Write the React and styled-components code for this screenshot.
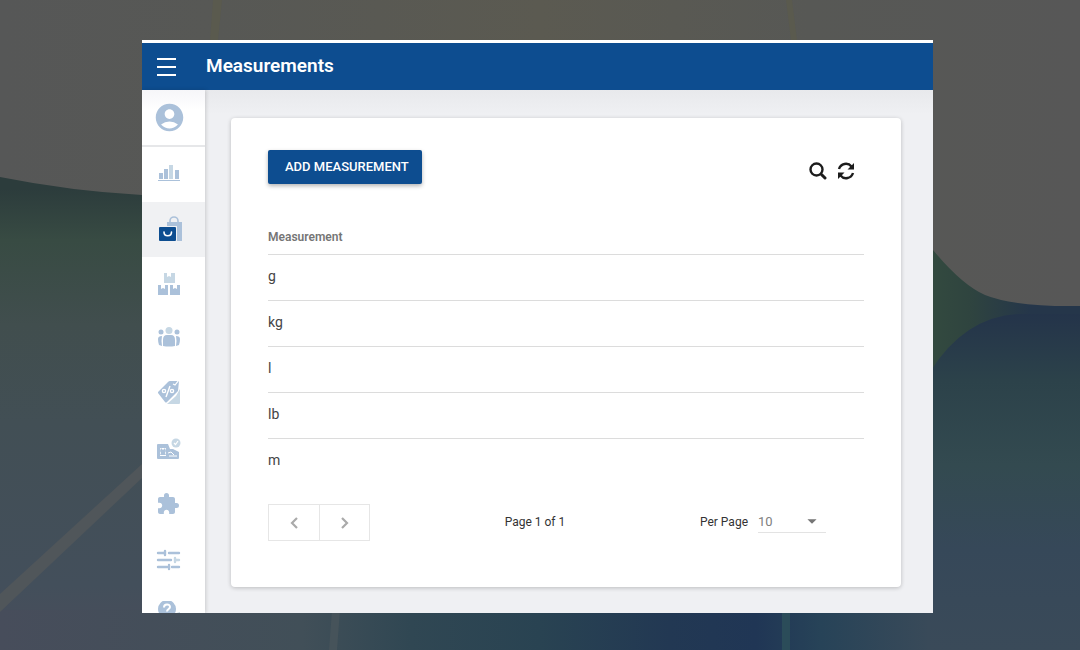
import React, { useState } from "react";
import styled, { createGlobalStyle } from "styled-components";
import { MdAccountCircle, MdExtension, MdArrowDropDown } from "react-icons/md";

const GlobalStyle = createGlobalStyle`
* {
box-sizing: border-box;
}
body {
margin: 0;
font-family: Roboto, "Liberation Sans", sans-serif;
color: #333;
}
`

const Desktop = styled.div`
position: relative;
height: 100vh;
padding: 40px 147px 37px 142px;
overflow: hidden;
`

const Wallpaper = styled.svg`
position: absolute;
inset: 0;
width: 100%;
height: 100%;
`

const Panel = styled.div`
position: relative;
height: 100%;
display: flex;
flex-direction: column;
overflow: hidden;
background-color: #eff0f3;
border-top: 3px solid #fff;
`

const TopBar = styled.header`
display: flex;
align-items: center;
gap: 29px;
flex: 0 0 47px;
padding: 0 15px;
background-color: #0d4d90;
color: #fff;
`

const MenuButton = styled.button`
display: flex;
padding: 0;
border: none;
background: none;
color: inherit;
cursor: pointer;
`

const Title = styled.h1`
margin: 0;
padding-bottom: 2px;
font-size: 19px;
line-height: 24px;
font-weight: 600;
`

const Body = styled.div`
display: flex;
flex: 1;
min-height: 0;
`

const SideBar = styled.nav`
position: relative;
z-index: 1;
flex: 0 0 63px;
overflow: hidden;
background-color: #fff;
box-shadow: 1px 0 4px rgba(0, 0, 0, 0.16);
`

const SideItem = styled.a`
display: flex;
align-items: center;
height: 55px;
padding-left: 13px;
color: #abc1da;
background-color: ${(props) => (props.$active ? "#f0f1f3" : "transparent")};
`

const Profile = styled(SideItem)`
height: 57px;
padding-left: 11px;
border-bottom: 2px solid #e6e7e9;
background-image: linear-gradient(#f6f6f9, #fff 20px);
`

const Main = styled.main`
flex: 1;
padding: 28px 32px 26px 26px;
background: linear-gradient(#e8e9ec, #eff0f3 24px);
`

const Card = styled.section`
height: 100%;
padding: 32px 37px;
background-color: #fff;
border-radius: 4px;
box-shadow: 0 1px 4px rgba(0, 0, 0, 0.22);
`

const Tools = styled.div`
display: flex;
justify-content: space-between;
align-items: flex-start;
`

const AddButton = styled.button`
height: 34px;
padding: 0 13px 2px 17px;
border: none;
border-radius: 2px;
background-color: #0d4d90;
box-shadow: 0 2px 4px rgba(0, 0, 0, 0.3);
color: #fff;
font-family: inherit;
font-size: 13px;
font-weight: 500;
cursor: pointer;
`

const Actions = styled.div`
display: flex;
gap: 10px;
padding: 12px 9px 0 0;
`

const IconButton = styled.button`
display: flex;
padding: 0;
border: none;
background: none;
color: #1c1c1c;
cursor: pointer;
`

const Table = styled.table`
width: 100%;
margin-top: 34px;
border-collapse: collapse;
text-align: left;
`

const Head = styled.th`
height: 36px;
padding: 2px 0 0;
border-bottom: 1px solid #dcdcdc;
font-size: 12px;
font-weight: 600;
color: #757575;
`

const Cell = styled.td`
height: 46px;
padding: 0 0 2px;
font-size: 14px;
color: #444;

tr:not(:last-child) > & {
border-bottom: 1px solid #dcdcdc;
}
`

const Pager = styled.footer`
display: flex;
align-items: center;
justify-content: space-between;
margin-top: 20px;
padding-right: 38px;
font-size: 12px;
`

const PageButtons = styled.div`
display: flex;
border: 1px solid #e6e6e6;
`

const PageButton = styled.button`
display: flex;
align-items: center;
justify-content: center;
width: 50px;
height: 35px;
padding: 0;
border: none;
background: none;
color: #aaa;
cursor: pointer;

& + & {
border-left: 1px solid #e6e6e6;
}
`

const PageInfo = styled.span`
padding-bottom: 2px;
`

const PerPage = styled.label`
display: flex;
align-items: center;
gap: 10px;
padding-bottom: 2px;
`

const SelectBox = styled.span`
display: flex;
align-items: center;
border-bottom: 1px solid #e3e3e3;
color: #757575;
`

const Select = styled.select`
width: 43px;
height: 22px;
padding: 0;
border: none;
background: none;
appearance: none;
color: #808080;
font-family: inherit;
font-size: 13px;
`

const Arrow = styled(MdArrowDropDown)`
margin-right: 3px;
`

const light = "#c6d7e4"
const blue = "#abc1da"
const dark = "#0d4d90"

const MenuIcon = () => (
    <svg width="20" height="20" viewBox="0 0 20 20" stroke="#fff" strokeWidth="2">
        <path d="M0 2h19M0 10h19M0 18h19" />
    </svg>
)

const SearchIcon = () => (
    <svg width="18" height="18" viewBox="0 0 18 18" fill="none" stroke="currentColor">
        <circle cx="7.5" cy="7.5" r="6" strokeWidth="2.4" />
        <path strokeWidth="3" strokeLinecap="round" d="M12.5 12.5l3.5 3.5" />
    </svg>
)

const RefreshIcon = () => (
    <svg width="18" height="18" viewBox="0 0 18 18" fill="currentColor">
        <path fill="none" stroke="currentColor" strokeWidth="2.4" d="M2 7A7.2 7.2 0 0 1 14.5 4.5M16 11A7.2 7.2 0 0 1 3.5 13.5" />
        <path d="M17 1v6.5h-6.5zM1 17v-6.5h6.5z" />
    </svg>
)

const Chevron = ({ d }) => (
    <svg width="10" height="12" viewBox="0 0 10 12" fill="none" stroke="currentColor" strokeWidth="2.2">
        <path d={d} />
    </svg>
)

// all side bar drawings share a 28px square
const SideIcon = ({ children }) => (
    <svg width="28" height="28" viewBox="0 0 28 28" fill={blue}>{children}</svg>
)

const ChartIcon = () => (
    <SideIcon>
        <path d="M4 12h4v6H4zM9 8h4v10H9zM20 9h4v9h-4z" />
        <path fill={light} d="M14 4h4v14h-4z" />
        <path d="M3 19h22v1H3z" />
    </SideIcon>
)

const BagsIcon = () => (
    <SideIcon>
        <path d="M12 6h15v19h-7V11h-8z" />
        <path fill="none" stroke={blue} strokeWidth="1.6" d="M15 7V5a4 4 0 0 1 8 0v2" />
        <path fill="#f0f1f3" d="M3 10h19v16H3z" />
        <rect x="4" y="11" width="17" height="14" rx="1" fill={dark} />
        <path fill="none" stroke="#fff" strokeWidth="1.6" strokeLinecap="round" d="M9 16c0 5 7.5 5 7.5 0" />
    </SideIcon>
)

const BoxesIcon = () => (
    <SideIcon>
        <path fill={light} d="M9 2h3v4l2-1 2 1V2h4v10H9z" />
        <path d="M3 14h3v4l2-1 2 1v-4h3v10H3zM15 14h3v4l2-1 2 1v-4h3v10H15z" />
    </SideIcon>
)

const PeopleIcon = () => (
    <SideIcon>
        <circle cx="14" cy="4.5" r="3.5" fill={light} />
        <circle cx="6" cy="6" r="2.5" />
        <circle cx="22" cy="6" r="2.5" />
        <path d="M8 20v-6q0-5 4-5h4q4 0 4 5v6q-6 1-12 0zM7 20l-3-1q-1-3-1-6 0-3 4-3-1 5 0 10zM21 20l3-1q1-3 1-6 0-3-4-3 1 5 0 10z" />
    </SideIcon>
)

const TagIcon = () => (
    <SideIcon>
        <path fill={light} d="M25 8v14q0 1-1 1H12l9-8z" />
        <path d="M3 11L13 1q1-1 2-1l8-1q1 0 1 1l-1 10-11 11q-1 1-2 0L3 12z" />
        <path fill="none" stroke="#fff" strokeWidth="1.2" d="M18 3l2 1 4-5" />
        <g fill="none" stroke="#fff" strokeWidth="1.4">
            <circle cx="9" cy="10" r="1.6" />
            <circle cx="17" cy="10" r="1.6" />
            <path d="M15 5l-4 11" />
        </g>
    </SideIcon>
)

const CardIcon = () => (
    <SideIcon>
        <circle cx="21" cy="7" r="4.5" fill={light} />
        <path fill="none" stroke="#fff" strokeWidth="1.2" d="M19 7l1.5 1.5L23 5" />
        <path d="M2 9q0-1 1-1h10l2 5h3l6 3v6q0 1-1 1H3q-1 0-1-1z" />
        <path fill="#fff" d="M5 12h6v8H5z" />
        <path d="M6 12l2 2 2-2 1 3-1 2 1 2H5l1-2-1-2z" />
        <path fill="none" stroke="#fff" d="M13 17l3-1 3 3M14 20h8" />
    </SideIcon>
)

const SlidersIcon = () => (
    <SideIcon>
        <g fill="none" stroke={blue} strokeWidth="2.4" strokeLinecap="round">
            <path d="M3 7h6M14 7h10M3 14h13M3 21h9M17 21h7" />
            <path d="M10 5v4M14 19v4" />
            <path stroke={light} d="M20 14h4M20 12v4" />
        </g>
    </SideIcon>
)

const HelpIcon = () => (
    <SideIcon>
        <circle cx="12" cy="8" r="9" />
        <path fill={light} d="M18 13l7-2v5h-7z" />
        <path fill="none" stroke="#fff" strokeWidth="2" d="M9 6.5c0-4 6-4 6-.5 0 2-3 2-3 4.500M12 12v2" />
    </SideIcon>
)

const links = [
    { name: "Reports", icon: <ChartIcon /> },
    { name: "Products", icon: <BagsIcon />, active: true },
    { name: "Stock", icon: <BoxesIcon /> },
    { name: "Customers", icon: <PeopleIcon /> },
    { name: "Promotions", icon: <TagIcon /> },
    { name: "Gift cards", icon: <CardIcon /> },
    { name: "Add-ons", icon: <SideIcon><MdExtension x="1" y="1" size={24} /></SideIcon> },
    { name: "Settings", icon: <SlidersIcon /> },
    { name: "Help", icon: <HelpIcon /> },
]

const measurements = ["g", "kg", "l", "lb", "m"]

const Background = () => (
    <Wallpaper viewBox="0 0 1080 650" preserveAspectRatio="none" aria-hidden="true">
        <defs>
            <linearGradient id="base" x1="0" y1="0" x2="0" y2="1">
                <stop offset="0.29" stopColor="#2c3c3c" />
                <stop offset="0.37" stopColor="#384b43" />
                <stop offset="0.5" stopColor="#414e4e" />
                <stop offset="0.65" stopColor="#424f55" />
                <stop offset="0.9" stopColor="#434f5b" />
                <stop offset="1" stopColor="#494d5b" />
            </linearGradient>
            <linearGradient id="right" x1="0" y1="0" x2="0" y2="1">
                <stop offset="0" stopColor="#24344a" />
                <stop offset="0.2" stopColor="#2c424a" />
                <stop offset="0.45" stopColor="#334a50" />
                <stop offset="0.7" stopColor="#364859" />
                <stop offset="1" stopColor="#3a4a59" />
            </linearGradient>
            <linearGradient id="floor" x1="0" y1="0" x2="1" y2="0">
                <stop offset="0" stopColor="#474d5b" />
                <stop offset="0.28" stopColor="#414f58" />
                <stop offset="0.38" stopColor="#304753" />
                <stop offset="0.5" stopColor="#294352" />
                <stop offset="0.62" stopColor="#223853" />
                <stop offset="0.7" stopColor="#203655" />
                <stop offset="0.76" stopColor="#274358" />
                <stop offset="0.86" stopColor="#394a59" />
                <stop offset="1" stopColor="#3a4a59" />
            </linearGradient>
            <linearGradient id="sheet" x1="0" y1="0" x2="1" y2="0">
                <stop offset="0" stopColor="#565757" />
                <stop offset="0.2" stopColor="#575855" />
                <stop offset="0.5" stopColor="#5b5a51" />
                <stop offset="0.75" stopColor="#575855" />
                <stop offset="1" stopColor="#575757" />
            </linearGradient>
            <linearGradient id="leaf" x1="0" y1="0" x2="1" y2="0">
                <stop offset="0" stopColor="#334a3f" />
                <stop offset="0.4" stopColor="#2f443f" />
                <stop offset="1" stopColor="#25364a" />
            </linearGradient>
        </defs>
        <rect width="1080" height="650" fill="url(#base)" />
        <rect y="610" width="1080" height="40" fill="url(#floor)" />
        <path d="M930 240h150v90H930z" fill="#25364a" />
        <path d="M930 240L1030 300V320L930 380z" fill="url(#leaf)" />
        <path d="M930 372Q965 316 1020 314H1080V650H930z" fill="url(#right)" />
        <path d="M0 594L142 464V478L0 612z" fill="#50565a" />
        <path d="M332 610h8l-3 40h-8z" fill="#46535a" />
        <path d="M782 610h8v40h-8z" fill="#2b4c59" />
        <path d="M0 0H1080V306Q1015 307 985 295Q962 285 933 250V195H142Q70 191 0 177z" fill="url(#sheet)" />
        <path d="M213 0h9l-4 40h-8zM786 0h6l5 40h-6z" fill="#5a5a4e" />
    </Wallpaper>
)

const App = () => {
    const [perPage, setPerPage] = useState("10")

    return (
        <Desktop>
            <GlobalStyle />
            <Background />
            <Panel>
                <TopBar>
                    <MenuButton aria-label="Menu"><MenuIcon /></MenuButton>
                    <Title>Measurements</Title>
                </TopBar>
                <Body>
                    <SideBar>
                        <Profile href="#profile" aria-label="Profile">
                            <MdAccountCircle size={33} />
                        </Profile>
                        {links.map((link) => (
                            <SideItem key={link.name} href="#" aria-label={link.name} $active={link.active}>
                                {link.icon}
                            </SideItem>
                        ))}
                    </SideBar>
                    <Main>
                        <Card>
                            <Tools>
                                <AddButton>ADD MEASUREMENT</AddButton>
                                <Actions>
                                    <IconButton aria-label="Search"><SearchIcon /></IconButton>
                                    <IconButton aria-label="Refresh"><RefreshIcon /></IconButton>
                                </Actions>
                            </Tools>
                            <Table>
                                <thead>
                                    <tr><Head>Measurement</Head></tr>
                                </thead>
                                <tbody>
                                    {measurements.map((unit) => (
                                        <tr key={unit}><Cell>{unit}</Cell></tr>
                                    ))}
                                </tbody>
                            </Table>
                            <Pager>
                                <PageButtons>
                                    <PageButton aria-label="Previous page"><Chevron d="M8 1L3 6l5 5" /></PageButton>
                                    <PageButton aria-label="Next page"><Chevron d="M2 1l5 5-5 5" /></PageButton>
                                </PageButtons>
                                <PageInfo>Page 1 of 1</PageInfo>
                                <PerPage>
                                    Per Page
                                    <SelectBox>
                                        <Select value={perPage} onChange={(e) => setPerPage(e.target.value)}>
                                            <option>10</option>
                                            <option>25</option>
                                            <option>50</option>
                                        </Select>
                                        <Arrow size={22} />
                                    </SelectBox>
                                </PerPage>
                            </Pager>
                        </Card>
                    </Main>
                </Body>
            </Panel>
        </Desktop>
    )
}

export default App
